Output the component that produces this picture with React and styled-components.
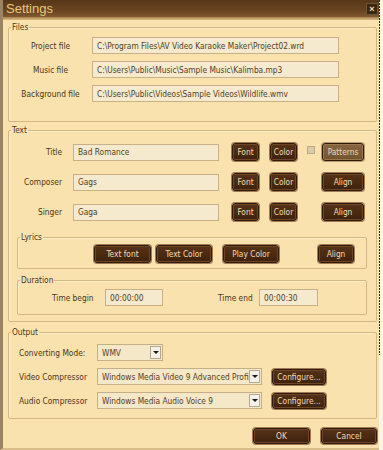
import styled, { createGlobalStyle } from "styled-components";

const Global = createGlobalStyle`
  html, body { margin: 0; padding: 0; }
  body {
    background: #fbf5e6;
    font-family: "DejaVu Sans Condensed", "DejaVu Sans", sans-serif;
    font-size: 8.3px;
    color: #4a3418;
  }
`;

const Screen = styled.div`
  display: flex;
  width: 383px;
  height: 450px;
  overflow: hidden;
`;

const Window = styled.div`
  box-sizing: border-box;
  width: 379px;
  height: 450px;
  border-left: 3px solid #9b8466;
  border-bottom: 2px solid #d8bd88;
  background: #fae2ae;
  display: flex;
  flex-direction: column;
`;

const Edge = styled.div`
  width: 1px;
  height: 355px;
  background: repeating-linear-gradient(to bottom, #2a2a2a 0 2px, transparent 2px 3px);
`;

const TitleBar = styled.div`
  height: 17px;
  display: flex;
  align-items: center;
  justify-content: space-between;
  padding: 0 1px 0 3px;
  background: linear-gradient(to bottom, #573718, #6a4522 65%, #80592f);
`;

const Title = styled.span`
  font-family: "Liberation Sans", Arial, sans-serif;
  font-size: 13px;
  color: #e8c87c;
  line-height: 17px;
`;

const Close = styled.span`
  box-sizing: border-box;
  width: 12px;
  height: 12px;
  display: flex;
  align-items: center;
  justify-content: center;
  background: #3b2811;
  border: 1px solid #6d5636;
  color: #eadcbc;
  font-family: "Liberation Sans", Arial, sans-serif;
  font-weight: bold;
  font-size: 9px;
`;

const Band = styled.div`
  height: 3px;
  background: linear-gradient(to bottom, #a8824d, #dcbd86);
`;

const Body = styled.div`
  padding: 2px 2px 0 5px;
  display: flex;
  flex-direction: column;
`;

const Group = styled.fieldset`
  margin: ${(p) => p.$m || "0"};
  padding: ${(p) => p.$p || "0"};
  border: 1px solid #d2b781;
  border-radius: 2px;
  box-shadow: inset 1px 1px 0 #fdeec8;
  min-width: 0;
`;

const Legend = styled.legend`
  margin-left: 2px;
  padding: 0 1px;
  line-height: 11px;
  color: #4a3418;
`;

const FileGrid = styled.div`
  display: grid;
  grid-template-columns: 83px 247px;
  row-gap: 7px;
  align-items: center;
`;

const FileLabel = styled.span`
  text-align: center;
`;

const Field = styled.input`
  box-sizing: border-box;
  width: ${(p) => p.$w}px;
  height: ${(p) => p.$h || 17}px;
  margin: 0;
  padding: 0 0 0 4px;
  border: 1px solid #c9b089;
  background: #f5eacd;
  color: #54401f;
  font: inherit;
  outline: none;
`;

const TextGrid = styled.div`
  display: grid;
  grid-template-columns: 64px 159px 38px 37px 15px 42px;
  row-gap: 12px;
  align-items: center;
`;

const RowLabel = styled.span`
  text-align: right;
  padding-right: 11px;
`;

const Check = styled.span`
  box-sizing: border-box;
  width: 8px;
  height: 8px;
  align-self: start;
  margin-top: 3px;
  background: #dacbaa;
  border: 1px solid #bcaa88;
`;

const Btn = styled.button`
  box-sizing: border-box;
  width: ${(p) => p.$w}px;
  height: ${(p) => p.$h || 18}px;
  margin: 0 0 0 ${(p) => p.$ml || 0}px;
  padding: 0;
  border: 1px solid #2e1b0b;
  border-radius: 3px;
  background: ${(p) =>
    p.$light
      ? "linear-gradient(to bottom, #876541, #74532f)"
      : "linear-gradient(to bottom, #563218, #3e220d)"};
  box-shadow: 0 0 0 1px ${(p) => (p.$light ? "#b89a6e" : "#a07a52")},
    inset 0 0 0 1px ${(p) => (p.$light ? "#98764e" : "#6e4526")};
  color: ${(p) => (p.$light ? "#ecd8b0" : "#f1dcb3")};
  font: inherit;
  cursor: default;
`;

const BtnRow = styled.div`
  display: flex;
  align-items: center;
  padding-left: ${(p) => p.$pl || 0}px;
`;

const TimeGrid = styled.div`
  display: grid;
  grid-template-columns: 53px 113px 41px 59px;
  align-items: center;
  padding-left: 34px;
`;

const OutGrid = styled.div`
  display: grid;
  grid-template-columns: 88px auto 1fr;
  row-gap: 7px;
  align-items: center;
`;

const OutLabel = styled.span`
  padding-left: 10px;
`;

const Select = styled.div`
  box-sizing: border-box;
  width: ${(p) => p.$w}px;
  height: 17px;
  display: flex;
  align-items: center;
  border: 1px solid #c6ae86;
  background: #f5e8c9;
  color: #54401f;
`;

const SelectText = styled.span`
  flex: 1;
  min-width: 0;
  padding-left: 4px;
  overflow: hidden;
  white-space: nowrap;
`;

const Arrow = styled.span`
  box-sizing: border-box;
  flex: none;
  width: 11px;
  height: 13px;
  margin-right: 1px;
  display: flex;
  align-items: center;
  justify-content: center;
  background: #f4f1ea;
  border: 1px solid #b5a892;
  &::after {
    content: "";
    border-left: 3px solid transparent;
    border-right: 3px solid transparent;
    border-top: 3px solid #1a1a1a;
  }
`;

const Footer = styled.div`
  display: flex;
  justify-content: flex-end;
  gap: 11px;
  margin-top: 9px;
`;

const textRows = [
  { label: "Title", value: "Bad Romance", extra: "patterns" },
  { label: "Composer", value: "Gags", extra: "align" },
  { label: "Singer", value: "Gaga", extra: "align" },
];

export default function App() {
  return (
    <Screen>
      <Global />
      <Window>
        <TitleBar>
          <Title>Settings</Title>
          <Close>×</Close>
        </TitleBar>
        <Band />
        <Body>
          <Group $p="4px 0 19px 0">
            <Legend>Files</Legend>
            <FileGrid>
              <FileLabel>Project file</FileLabel>
              <Field $w={247} readOnly value="C:\Program Files\AV Video Karaoke Maker\Project02.wrd" />
              <FileLabel>Music file</FileLabel>
              <Field $w={247} readOnly value="C:\Users\Public\Music\Sample Music\Kalimba.mp3" />
              <FileLabel>Background file</FileLabel>
              <Field $w={247} readOnly value="C:\Users\Public\Videos\Sample Videos\Wildlife.wmv" />
            </FileGrid>
          </Group>

          <Group $m="3px 0 0 0" $p="7px 0 6px 0">
            <Legend>Text</Legend>
            <TextGrid>
              {textRows.map((r) => [
                <RowLabel key={r.label + "l"}>{r.label}</RowLabel>,
                <Field key={r.label + "f"} $w={146} readOnly value={r.value} />,
                <Btn key={r.label + "a"} $w={27}>Font</Btn>,
                <Btn key={r.label + "b"} $w={27}>Color</Btn>,
                r.extra === "patterns" ? <Check key={r.label + "c"} /> : <span key={r.label + "c"} />,
                r.extra === "patterns" ? (
                  <Btn key={r.label + "d"} $w={42} $light>Patterns</Btn>
                ) : (
                  <Btn key={r.label + "d"} $w={42}>Align</Btn>
                ),
              ])}
            </TextGrid>

            <Group $m="11px 9px 0 8px" $p="2px 0 5px 0">
              <Legend>Lyrics</Legend>
              <BtnRow $pl={76}>
                <Btn $w={57}>Text font</Btn>
                <Btn $w={56} $ml={5}>Text Color</Btn>
                <Btn $w={56} $ml={11}>Play Color</Btn>
                <Btn $w={36} $ml={39}>Align</Btn>
              </BtnRow>
            </Group>

            <Group $m="6px 9px 0 8px" $p="3px 0 8px 0">
              <Legend>Duration</Legend>
              <TimeGrid>
                <span>Time begin</span>
                <Field $w={58} readOnly value="00:00:00" />
                <span>Time end</span>
                <Field $w={59} readOnly value="00:00:30" />
              </TimeGrid>
            </Group>
          </Group>

          <Group $m="5px 0 0 0" $p="6px 0 9px 0">
            <Legend>Output</Legend>
            <OutGrid>
              <OutLabel>Converting Mode:</OutLabel>
              <Select $w={66}>
                <SelectText>WMV</SelectText>
                <Arrow />
              </Select>
              <span />
              <OutLabel>Video Compressor</OutLabel>
              <Select $w={165}>
                <SelectText>Windows Media Video 9 Advanced Profile</SelectText>
                <Arrow />
              </Select>
              <BtnRow>
                <Btn $w={54} $h={16} $ml={10}>Configure...</Btn>
              </BtnRow>
              <OutLabel>Audio Compressor</OutLabel>
              <Select $w={165}>
                <SelectText>Windows Media Audio Voice 9</SelectText>
                <Arrow />
              </Select>
              <BtnRow>
                <Btn $w={54} $h={16} $ml={10}>Configure...</Btn>
              </BtnRow>
            </OutGrid>
          </Group>

          <Footer>
            <Btn $w={57} $h={16}>OK</Btn>
            <Btn $w={56} $h={16}>Cancel</Btn>
          </Footer>
        </Body>
      </Window>
      <Edge />
    </Screen>
  );
}
